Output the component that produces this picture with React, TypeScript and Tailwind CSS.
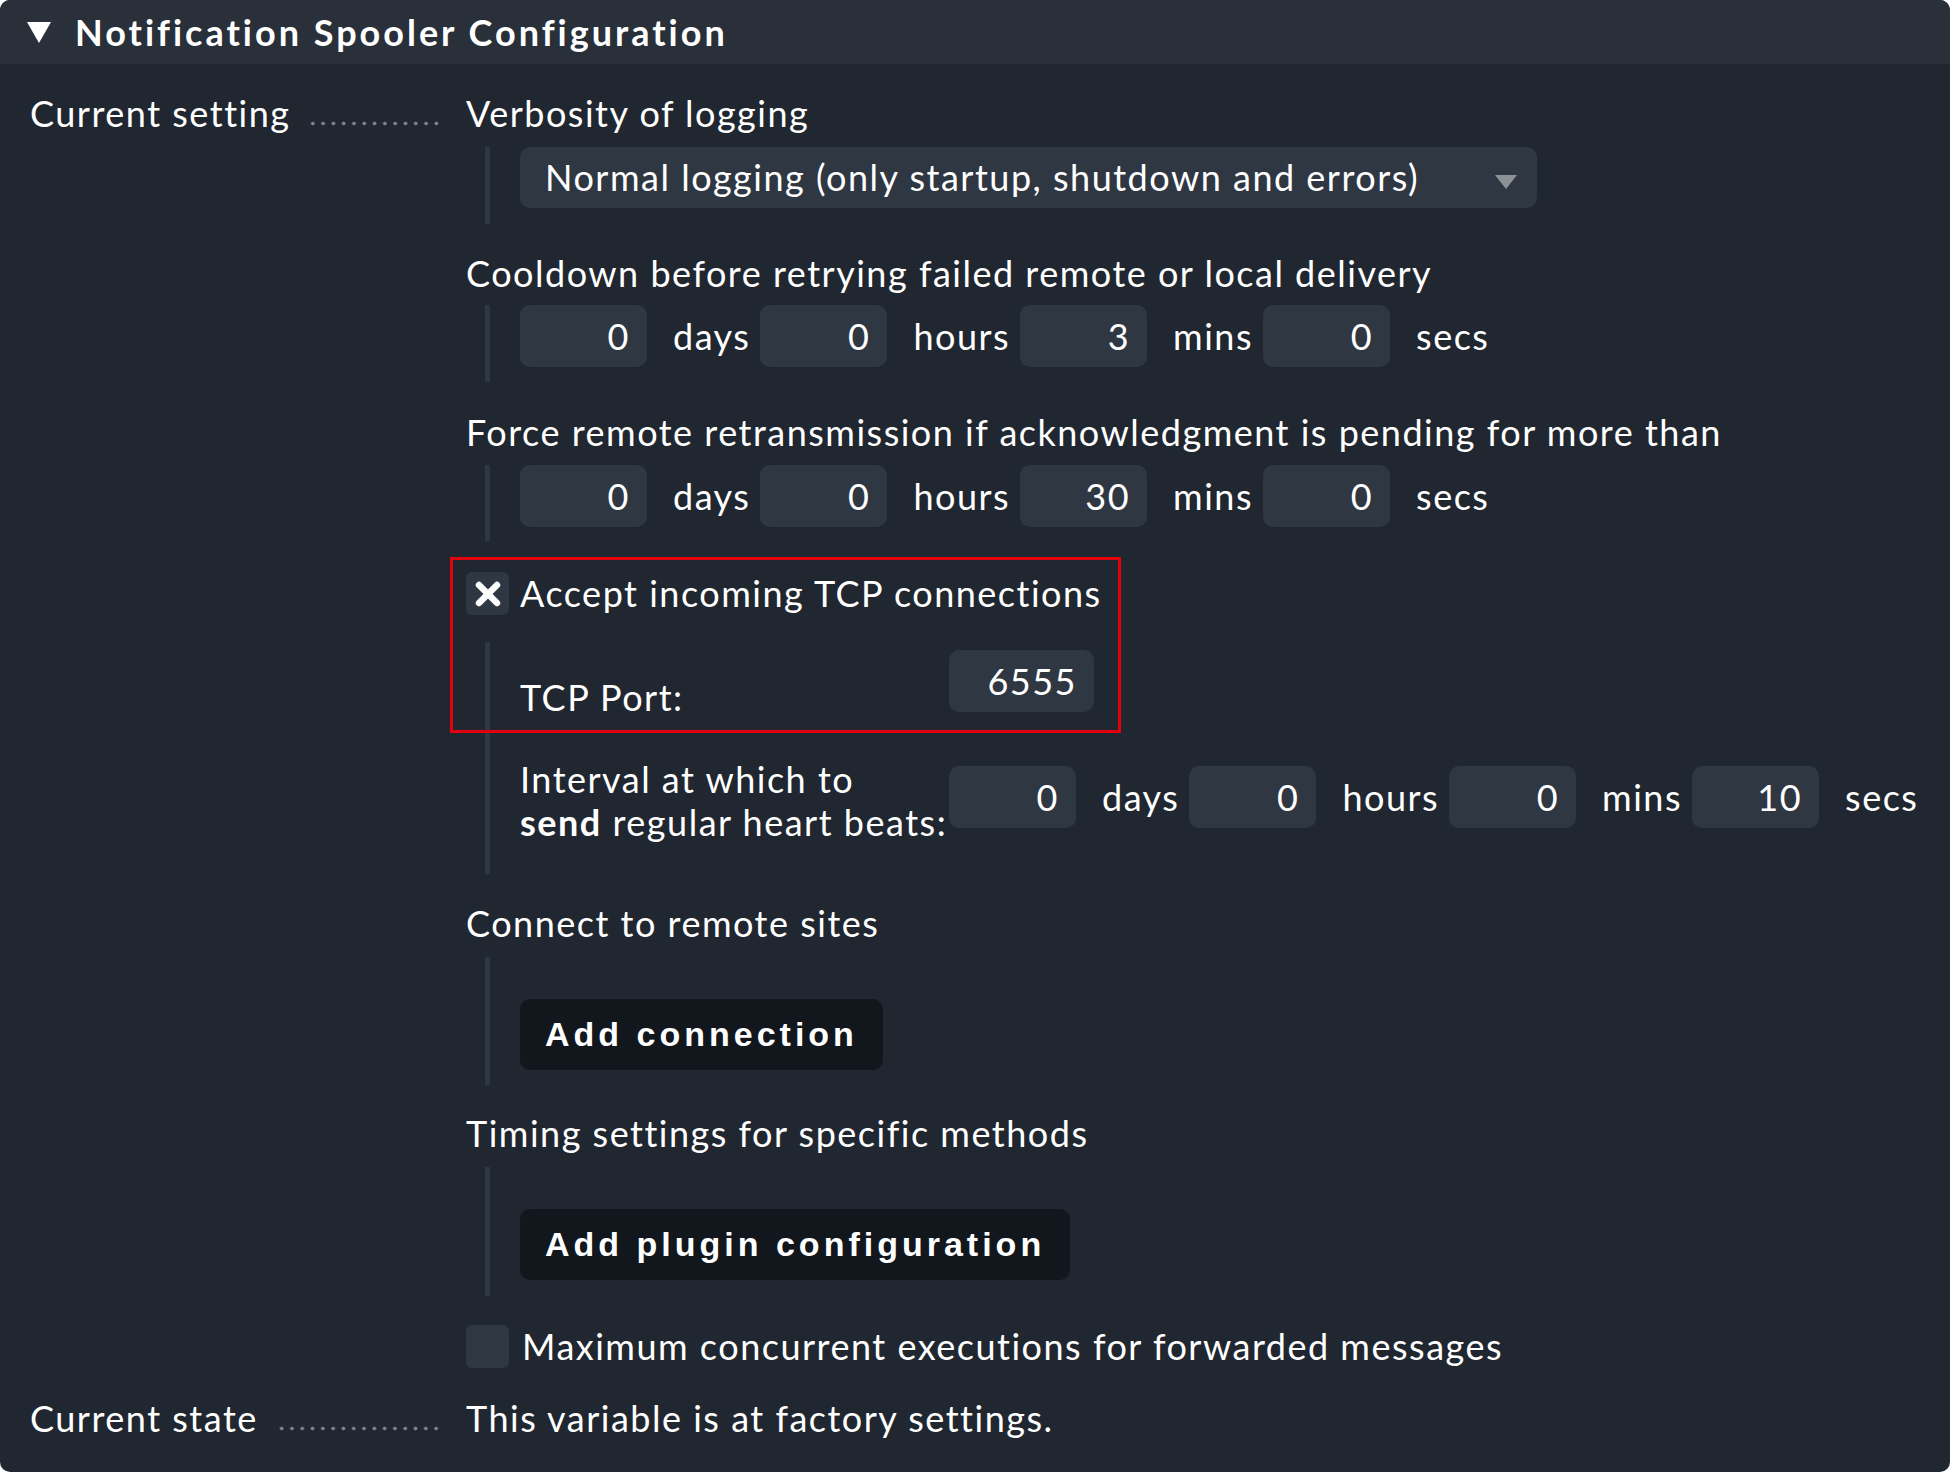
import React from "react";

const font = { fontFamily: "Lato, 'Noto Sans', sans-serif" };

function Dots() {
  return (
    <span className="flex-1 self-end mb-[9px] ml-[19px] h-[5px] bg-[radial-gradient(circle,#7d838a_1.6px,transparent_2.2px)] bg-[length:10.3px_5px] bg-repeat-x bg-right" />
  );
}

function NumInput({ value, w = "w-[127px]" }: { value: string; w?: string }) {
  return (
    <div className={`${w} h-[62px] rounded-[10px] bg-[#2f3743] flex items-center justify-end pr-[17px]`}>
      {value}
    </div>
  );
}

function Age({ values }: { values: string[] }) {
  const units = ["days", "hours", "mins", "secs"];
  return (
    <div className="flex items-center">
      {values.map((v, i) => (
        <React.Fragment key={i}>
          <NumInput value={v} />
          <span className={i < 3 ? "pl-[26px] pr-[10px]" : "pl-[26px]"}>{units[i]}</span>
        </React.Fragment>
      ))}
    </div>
  );
}

function Nested({ children, className = "" }: { children: React.ReactNode; className?: string }) {
  return (
    <div className={`ml-[19px] border-l-[5px] border-[#2f3743] pl-[30px] ${className}`}>{children}</div>
  );
}

function Checkbox({ checked }: { checked?: boolean }) {
  return (
    <div className="w-[43px] h-[43px] rounded-[6px] bg-[#2f3743] flex items-center justify-center shrink-0">
      {checked && (
        <svg width="26" height="26" viewBox="0 0 26 26">
          <path d="M4 4 L22 22 M22 4 L4 22" stroke="#fff" strokeWidth="6.5" strokeLinecap="round" />
        </svg>
      )}
    </div>
  );
}

function Button({ label }: { label: string }) {
  return (
    <div
      className="inline-flex items-center h-[71px] rounded-[10px] bg-[#12171d] px-[25px] text-[34px] font-bold tracking-[4px]"
      style={{ fontFamily: "'Liberation Sans', Arial, sans-serif" }}
    >
      {label}
    </div>
  );
}

export default function App() {
  return (
    <div className="w-[1950px] h-[1472px] bg-white" style={font}>
      <div className="h-full rounded-[10px] bg-[#212730] text-white text-[36px] leading-[43px] tracking-[1.5px] overflow-hidden">
        <div className="h-[64px] bg-[#29303a] flex items-center pl-[27px]">
          <svg width="24" height="22" viewBox="0 0 24 22" className="mt-[2px]">
            <path d="M0 0 H24 L12 21 Z" fill="#fff" />
          </svg>
          <span className="ml-[24px] font-bold tracking-[3px]">Notification Spooler Configuration</span>
        </div>

        <div className="grid grid-cols-[466px_1fr] pt-[28px]">
          <div className="pl-[30px] pr-[25px] flex h-[43px]">
            <span>Current setting</span>
            <Dots />
          </div>
          <div className="pr-[10px]">
            <div>Verbosity of logging</div>
            <Nested className="mt-[12px] pb-[16px]">
              <div className="w-[1017px] h-[61px] rounded-[10px] bg-[#2f3743] flex items-center justify-between pl-[25px] pr-[20px]">
                <span>Normal logging (only startup, shutdown and errors)</span>
                <svg width="22" height="14" viewBox="0 0 22 14" className="mt-[8px]">
                  <path d="M0 0 H22 L11 14 Z" fill="#8c9097" />
                </svg>
              </div>
            </Nested>

            <div className="mt-[28px]">Cooldown before retrying failed remote or local delivery</div>
            <Nested className="mt-[10px] pb-[15px]">
              <Age values={["0", "0", "3", "0"]} />
            </Nested>

            <div className="mt-[29px]">Force remote retransmission if acknowledgment is pending for more than</div>
            <Nested className="mt-[11px] pb-[14px]">
              <Age values={["0", "0", "30", "0"]} />
            </Nested>

            <div className="relative mt-[31px]">
              <div className="absolute left-[-16px] top-[-15px] w-[671px] h-[176px] border-[3px] border-[#e3000f] pointer-events-none" />
              <div className="flex items-center gap-[11px] h-[43px]">
                <Checkbox checked />
                <span>Accept incoming TCP connections</span>
              </div>
              <Nested className="mt-[27px] pt-[8px] pb-[30px]">
                <div className="grid grid-cols-[429px_auto] justify-start">
                  <div className="self-end mb-[-7px]">TCP Port:</div>
                  <NumInput value="6555" w="w-[145px]" />
                  <div className="mt-[46px] leading-[43px]">
                    Interval at which to
                    <br />
                    <b>send</b> regular heart beats:
                  </div>
                  <div className="mt-[54px] self-start flex items-center">
                    <Age values={["0", "0", "0", "10"]} />
                  </div>
                </div>
              </Nested>
            </div>

            <div className="mt-[28px]">Connect to remote sites</div>
            <Nested className="mt-[12px] pt-[42px] pb-[15px]">
              <Button label="Add connection" />
            </Nested>

            <div className="mt-[27px]">Timing settings for specific methods</div>
            <Nested className="mt-[12px] pt-[42px] pb-[16px]">
              <Button label="Add plugin configuration" />
            </Nested>

            <div className="mt-[29px] flex items-center gap-[13px] h-[43px]">
              <Checkbox />
              <span>Maximum concurrent executions for forwarded messages</span>
            </div>
          </div>

          <div className="pl-[30px] pr-[25px] flex h-[43px] mt-[29px]">
            <span>Current state</span>
            <Dots />
          </div>
          <div className="mt-[29px]">This variable is at factory settings.</div>
        </div>
      </div>
    </div>
  );
}
